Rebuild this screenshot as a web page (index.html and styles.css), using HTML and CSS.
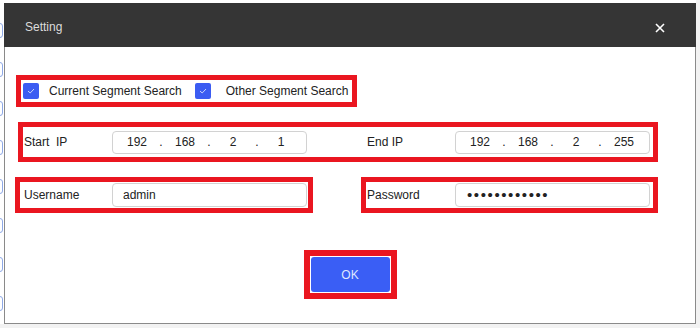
FILE: index.html
```html
<!DOCTYPE html>
<html>
<head>
<meta charset="utf-8">
<link rel="stylesheet" href="styles.css">
</head>
<body>
<div class="page">
  <div class="backdrop">
    <div class="brackets">
      <span class="bracket"></span><span class="bracket"></span><span class="bracket"></span><span class="bracket"></span>
      <span class="bracket"></span><span class="bracket"></span><span class="bracket"></span><span class="bracket"></span>
    </div>
  </div>
  <div class="dialog">
    <div class="header">
      <span class="title">Setting</span>
      <svg class="close" width="10" height="10" viewBox="0 0 10 10"><path d="M1 1L9 9M9 1L1 9" stroke="#fff" stroke-width="1.6"/></svg>
    </div>
    <div class="body">
      <div class="mark row-check">
        <label class="check"><span class="box"><svg width="10" height="8" viewBox="0 0 10 8"><path d="M2 4l2.2 2L8 2" fill="none" stroke="#c9d3fb" stroke-width="1"/></svg></span><span class="check-text">Current Segment Search</span></label>
        <label class="check second"><span class="box"><svg width="10" height="8" viewBox="0 0 10 8"><path d="M2 4l2.2 2L8 2" fill="none" stroke="#c9d3fb" stroke-width="1"/></svg></span><span class="check-text">Other Segment Search</span></label>
      </div>
      <div class="mark row-ip">
        <span class="label">Start&nbsp; IP</span>
        <div class="input ip"><span class="seg">192</span><span class="dot">.</span><span class="seg">168</span><span class="dot">.</span><span class="seg">2</span><span class="dot">.</span><span class="seg">1</span></div>
        <span class="label end">End IP</span>
        <div class="input ip"><span class="seg">192</span><span class="dot">.</span><span class="seg">168</span><span class="dot">.</span><span class="seg">2</span><span class="dot">.</span><span class="seg">255</span></div>
      </div>
      <div class="row-cred">
        <div class="mark cred user">
          <span class="label">Username</span>
          <div class="input text">admin</div>
        </div>
        <div class="mark cred pass">
          <span class="label">Password</span>
          <div class="input text pw">••••••••••••</div>
        </div>
      </div>
      <div class="ok-row">
        <div class="mark ok-mark"><button class="ok">OK</button></div>
      </div>
    </div>
  </div>
</div>
</body>
</html>
```
FILE: styles.css
```css
* { box-sizing: border-box; }
html, body { margin: 0; padding: 0; }
body {
  width: 700px;
  height: 328px;
  overflow: hidden;
  font-family: "Liberation Sans", Arial, sans-serif;
  font-size: 12px;
  color: #222;
  background: #ffffff;
}
.page { position: relative; width: 700px; height: 328px; }
.backdrop {
  width: 700px;
  height: 328px;
  background: linear-gradient(#ffffff, #ffffff) no-repeat 0 0 / 696px 324px, #f2f2f2;
}
.brackets {
  display: flex;
  flex-direction: column;
  gap: 24px;
  padding-top: 23px;
  margin-left: -6px;
}
.bracket {
  display: block;
  width: 9px;
  height: 15px;
  border: 1px solid #8fa9e6;
  border-radius: 3px;
}
.dialog {
  position: absolute;
  left: 4px;
  top: 3px;
  width: 692px;
  height: 321px;
  background: #fff;
  border: 1px solid #8a8a8a;
  border-top: none;
  display: flex;
  flex-direction: column;
}
.header {
  height: 44px;
  margin: 0 -1px;
  background: #353535;
  display: flex;
  align-items: center;
  justify-content: space-between;
  padding: 5px 31px 0 21px;
  flex-shrink: 0;
}
.title { color: #dcdcdc; font-size: 12px; margin-top: -2px; }
.close { display: block; }
.body { display: flex; flex-direction: column; }
.mark { border: 5px solid #ea1620; }
.row-check {
  align-self: flex-start;
  margin: 28px 0 0 11px;
  height: 32px;
  display: flex;
  align-items: center;
  padding: 0 4px 0 2px;
}
.check { display: flex; align-items: center; }
.check.second { margin-left: 13px; }
.box {
  width: 16px;
  height: 16px;
  background: #3b5cf2;
  border-radius: 2px;
  display: flex;
  align-items: center;
  justify-content: center;
}
.check-text { margin-left: 10px; color: #222; }
.check.second .check-text { margin-left: 15px; }
.row-ip {
  align-self: flex-start;
  margin: 15px 0 0 13px;
  height: 40px;
  width: 640px;
  display: grid;
  grid-template-columns: 88px 195px 60px 88px 195px;
  align-items: center;
  padding: 0 4px 0 1px;
}
.row-ip .end { grid-column: 4; }
.label { color: #222; }
.input {
  height: 23px;
  border: 1px solid #d2d2d2;
  border-radius: 4px;
  background: #fff;
  display: flex;
  align-items: center;
}
.ip { padding-left: 4px; }
.seg { width: 40px; text-align: center; }
.dot { width: 8px; text-align: center; }
.row-cred {
  display: flex;
  margin-top: 15px;
}
.cred {
  height: 36px;
  display: flex;
  align-items: center;
}
.cred .label { width: 88px; }
.cred .input { width: 195px; height: 24px; }
.user { margin-left: 10px; width: 298px; padding-left: 4px; }
.pass { margin-left: 48px; width: 297px; padding-left: 1px; }
.text { padding-left: 10px; }
.pw { font-size: 15px; letter-spacing: 1.6px; padding-left: 11px; padding-bottom: 1px; }
.ok-row {
  display: flex;
  justify-content: center;
  margin-top: 37px;
}
.ok-mark { border-width: 6px; padding: 1px; }
.ok {
  width: 79px;
  height: 35px;
  border: none;
  border-radius: 3px;
  background: #3a5ef5;
  color: #dfe6ff;
  font-family: "Liberation Sans", Arial, sans-serif;
  font-size: 12px;
  display: block;
}
```
